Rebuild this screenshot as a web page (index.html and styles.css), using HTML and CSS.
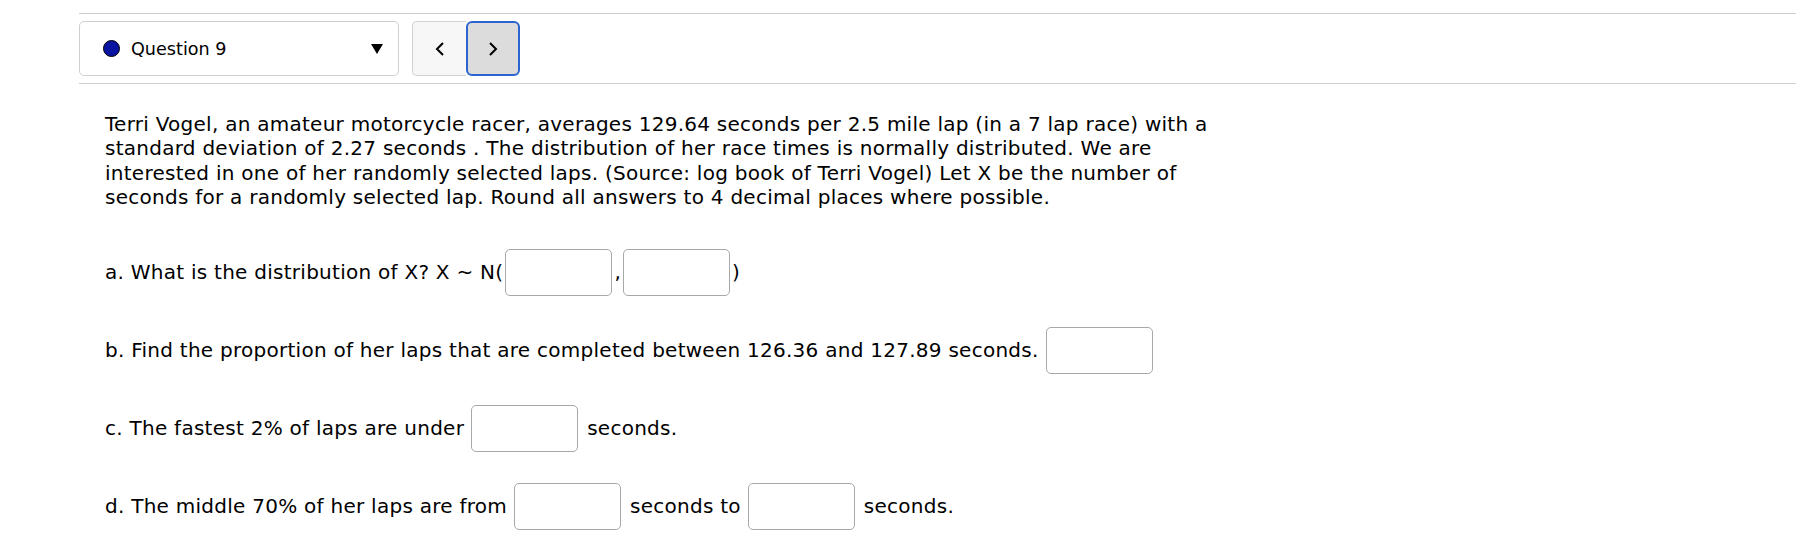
FILE: index.html
```html
<!DOCTYPE html>
<html>
<head>
<meta charset="utf-8">
<link rel="stylesheet" href="styles.css">
</head>
<body>
<div class="nav-row">
  <div class="q-select">
    <span class="dot"></span>
    <span class="q-label">Question 9</span>
    <span class="caret"></span>
  </div>
  <div class="q-nav">
    <button class="nav-btn prev"><svg width="10" height="16" viewBox="0 0 10 16"><polyline points="8,2 2,8 8,14" fill="none" stroke="#000" stroke-width="2"/></svg></button>
    <button class="nav-btn next"><svg width="10" height="16" viewBox="0 0 10 16"><polyline points="2,2 8,8 2,14" fill="none" stroke="#000" stroke-width="2"/></svg></button>
  </div>
</div>
<div class="question">
  <p class="intro">Terri Vogel, an amateur motorcycle racer, averages 129.64 seconds per 2.5 mile lap (in a 7 lap race) with a<br>standard deviation of 2.27 seconds . The distribution of her race times is normally distributed. We are<br>interested in one of her randomly selected laps. (Source: log book of Terri Vogel) Let X be the number of<br>seconds for a randomly selected lap. Round all answers to 4 decimal places where possible.</p>
  <div class="part">a. What is the distribution of X? X ~ N(<span class="box tight"></span>,<span class="box tight"></span>)</div>
  <div class="part">b. Find the proportion of her laps that are completed between 126.36 and 127.89 seconds.<span class="box"></span></div>
  <div class="part">c. The fastest 2% of laps are under<span class="box"></span>seconds.</div>
  <div class="part">d. The middle 70% of her laps are from<span class="box"></span>seconds to<span class="box"></span>seconds.</div>
</div>
</body>
</html>
```
FILE: styles.css
```css
html, body {
  margin: 0;
  padding: 0;
  background: #fff;
}
body {
  font-family: "DejaVu Sans", Verdana, sans-serif;
  color: #000;
}
.nav-row {
  margin: 13px 0 0 79px;
  border-top: 1px solid #cfcfcf;
  border-bottom: 1px solid #cfcfcf;
  padding: 7px 0;
  display: flex;
  align-items: center;
  gap: 13px;
}
.q-select {
  width: 318px;
  height: 53px;
  border: 1px solid #cfcfcf;
  border-radius: 5px;
  display: flex;
  align-items: center;
  box-sizing: content-box;
}
.dot {
  width: 15px;
  height: 15px;
  border-radius: 50%;
  background: #0a14a0;
  border: 1.5px solid #000;
  margin-left: 23px;
}
.q-label {
  font-size: 17.6px;
  margin-left: 11px;
  flex: 1;
}
.caret {
  width: 0;
  height: 0;
  border-left: 6px solid transparent;
  border-right: 6px solid transparent;
  border-top: 10px solid #000;
  margin-right: 15px;
}
.q-nav {
  display: flex;
  height: 55px;
}
.nav-btn {
  width: 54px;
  height: 55px;
  padding: 0;
  display: flex;
  align-items: center;
  justify-content: center;
  font: inherit;
}
.prev {
  background: #f7f7f7;
  border: 1px solid #d2d2d2;
  border-right: none;
  border-radius: 5px 0 0 5px;
}
.next {
  background: #dcdcdc;
  border: 2px solid #2a64cf;
  border-radius: 6px;
}
.question {
  padding-left: 105px;
  font-size: 20px;
  letter-spacing: 0.26px;
}
.intro {
  margin: 28px 0 0 0;
  line-height: 24.4px;
}
.part {
  display: flex;
  align-items: center;
  height: 47px;
  margin-top: 31px;
  white-space: pre;
}
.intro + .part {
  margin-top: 39px;
}
.box {
  display: inline-block;
  width: 105px;
  height: 45px;
  border: 1px solid #a8a8a8;
  border-radius: 5px;
  margin: 0 9px 0 7px;
}
.box.tight {
  margin: 0 2px;
}
```
